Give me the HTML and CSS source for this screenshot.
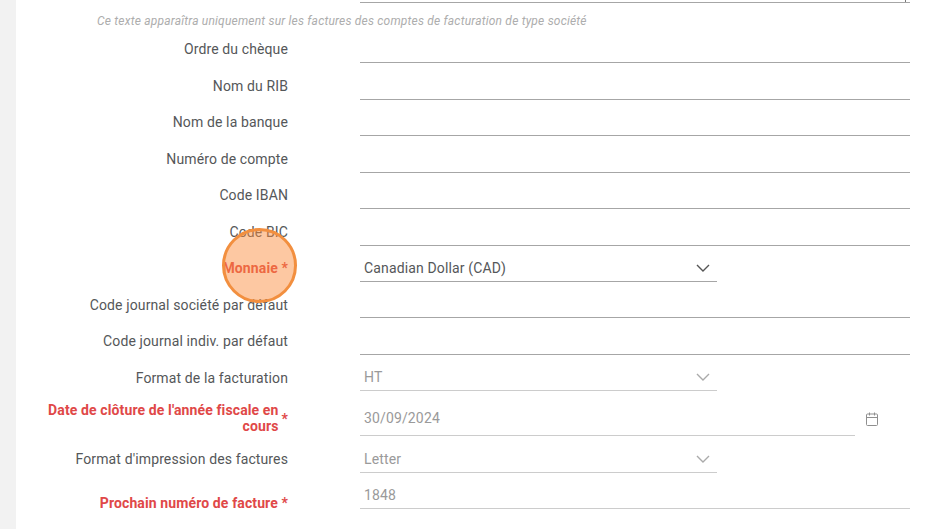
FILE: index.html
```html
<!DOCTYPE html>
<html lang="fr">
<head>
    <meta charset="UTF-8">
    <title>Paramètres de facturation</title>
    <link rel="stylesheet" href="styles.css">
</head>
<body>
    <div class="page">
        <div class="sidebar"></div>
        <form class="billing-form">
            <div class="textarea-end"><span class="resize-grip"></span></div>
            <p class="hint">Ce texte apparaîtra uniquement sur les factures des comptes de facturation de type société</p>

            <div class="row">
                <label class="row-label">Ordre du chèque</label>
                <div class="field"></div>
            </div>
            <div class="row">
                <label class="row-label">Nom du RIB</label>
                <div class="field"></div>
            </div>
            <div class="row">
                <label class="row-label">Nom de la banque</label>
                <div class="field"></div>
            </div>
            <div class="row">
                <label class="row-label">Numéro de compte</label>
                <div class="field"></div>
            </div>
            <div class="row">
                <label class="row-label">Code IBAN</label>
                <div class="field"></div>
            </div>
            <div class="row">
                <label class="row-label">Code BIC</label>
                <div class="field"></div>
            </div>
            <div class="row row-short">
                <label class="row-label required">Monnaie *</label>
                <div class="field field-select">
                    <span class="value">Canadian Dollar (CAD)</span>
                    <svg class="chevron" viewBox="0 0 14 8"><path d="M1 1l6 6 6-6"/></svg>
                </div>
            </div>
            <div class="row">
                <label class="row-label">Code journal société par défaut</label>
                <div class="field"></div>
            </div>
            <div class="row">
                <label class="row-label">Code journal indiv. par défaut</label>
                <div class="field"></div>
            </div>
            <div class="row">
                <label class="row-label">Format de la facturation</label>
                <div class="field field-select disabled">
                    <span class="value">HT</span>
                    <svg class="chevron" viewBox="0 0 14 8"><path d="M1 1l6 6 6-6"/></svg>
                </div>
            </div>
            <div class="row row-tall">
                <label class="row-label required label-wrap">
                    <span>Date de clôture de l'année fiscale en cours</span>
                    <span class="star">*</span>
                </label>
                <div class="date-wrap">
                    <div class="field disabled">
                        <span class="value">30/09/2024</span>
                    </div>
                    <svg class="calendar" viewBox="0 0 12 14">
                        <rect x="0.5" y="2" width="11" height="11.5" rx="1"/>
                        <path d="M0.5 5.5h11M3.5 0.5v3M8.5 0.5v3"/>
                    </svg>
                </div>
            </div>
            <div class="row">
                <label class="row-label">Format d'impression des factures</label>
                <div class="field field-select disabled">
                    <span class="value">Letter</span>
                    <svg class="chevron" viewBox="0 0 14 8"><path d="M1 1l6 6 6-6"/></svg>
                </div>
            </div>
            <div class="row">
                <label class="row-label required label-low">Prochain numéro de facture *</label>
                <div class="field disabled">
                    <span class="value">1848</span>
                </div>
            </div>
        </form>
    </div>
    <div class="click-marker"></div>
</body>
</html>
```

FILE: styles.css
```css
:root {
    --label: #555759;
    --required: #e04848;
    --value: #555759;
    --value-disabled: #9a9a9a;
    --line: #a6a6a6;
    --line-disabled: #cccccc;
}

html, body {
    height: 100%;
}

body {
    margin: 0;
    background-color: #fff;
    font-family: Roboto, "Liberation Sans", sans-serif;
    font-size: 14px;
    letter-spacing: 0.14px;
    color: var(--label);
    overflow: hidden;
    position: relative;
}

.page {
    display: flex;
    height: 529px;
}

.sidebar {
    width: 16px;
    flex-shrink: 0;
    background-color: #f2f2f2;
}

.billing-form {
    flex: 1;
    padding-right: 36px;
}

.textarea-end {
    height: 2px;
    margin-left: 344px;
    border-bottom: 1px solid var(--line);
    position: relative;
}

.resize-grip {
    position: absolute;
    right: 4px;
    top: 0;
    width: 1px;
    height: 2px;
    background-color: #777;
}

.hint {
    margin: 0;
    height: 23.5px;
    padding: 11px 0 0 81px;
    box-sizing: border-box;
    font-size: 12px;
    letter-spacing: 0.2px;
    line-height: 15px;
    font-style: italic;
    color: #adadad;
    white-space: nowrap;
}

.row {
    display: flex;
    height: 36.5px;
    column-gap: 72px;
}

.row-short {
    height: 36.3px;
}

.row-tall {
    height: 45px;
}

.row-label {
    width: 272px;
    flex-shrink: 0;
    box-sizing: border-box;
    padding-top: 12.75px;
    text-align: right;
    line-height: 20px;
    letter-spacing: 0.12px;
}

.required {
    color: var(--required);
    font-weight: 700;
}

.label-wrap {
    display: flex;
    justify-content: flex-end;
    align-items: center;
    column-gap: 3px;
    padding-top: 9px;
    padding-left: 20px;
    line-height: 16px;
}

.label-low {
    padding-top: 20px;
}

.star {
    font-size: 14px;
    padding-top: 2px;
}

.field {
    flex: 1;
    display: flex;
    align-items: flex-end;
    justify-content: space-between;
    box-sizing: border-box;
    padding: 0 7px 3px 4px;
    border-bottom: 1px solid var(--line);
}

.field-select {
    flex: none;
    width: 357px;
}

.value {
    line-height: 20px;
    color: var(--value);
}

.disabled {
    border-bottom-color: var(--line-disabled);
}

.disabled .value {
    color: var(--value-disabled);
}

.chevron {
    width: 14px;
    height: 8px;
    margin-bottom: 6px;
    fill: none;
    stroke: #555;
    stroke-width: 1.4;
}

.disabled .chevron {
    stroke: #aaa;
}

.date-wrap {
    flex: 1;
    display: flex;
    align-items: stretch;
}

.date-wrap .field {
    padding-bottom: 7px;
}

.calendar {
    width: 12px;
    height: 14px;
    margin: 21px 32px 0 11px;
    fill: none;
    stroke: #8f8f8f;
    stroke-width: 1;
}

.click-marker {
    position: absolute;
    left: 222px;
    top: 228px;
    width: 75px;
    height: 75px;
    box-sizing: border-box;
    border: 3px solid #f28f3f;
    border-radius: 50%;
    background-color: rgba(250, 140, 60, 0.48);
}
```
